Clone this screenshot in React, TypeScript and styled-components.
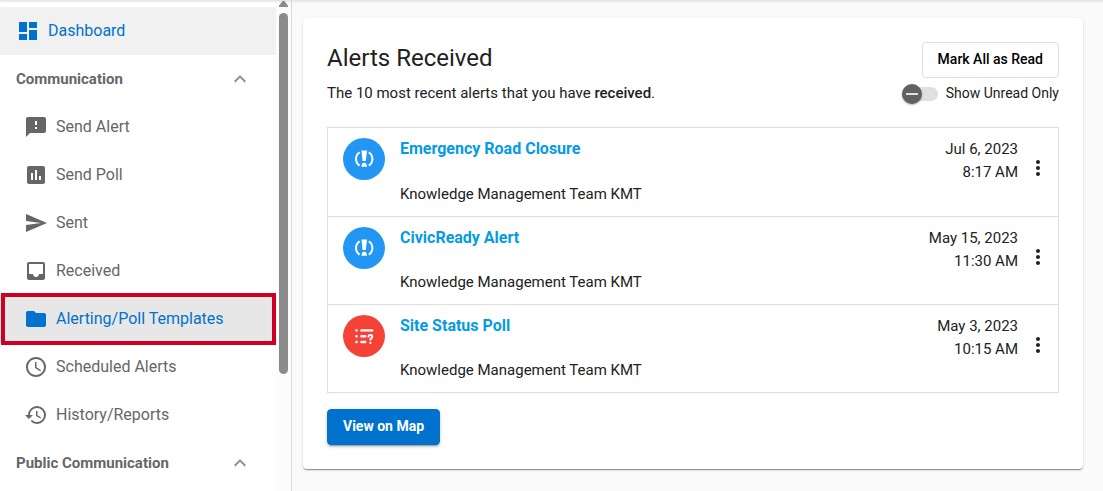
import React from 'react';
import styled, { createGlobalStyle, css } from 'styled-components';
import {
  MdAccessTime,
  MdDashboard,
  MdExpandLess,
  MdFeedback,
  MdFolder,
  MdHistory,
  MdInbox,
  MdMoreVert,
  MdPoll,
  MdSend,
} from 'react-icons/md';

const GlobalStyle = createGlobalStyle`
  *, *::before, *::after { box-sizing: border-box; }
  body {
    margin: 0;
    background: #fafafa;
    color: #212121;
    font-family: Roboto, "Liberation Sans", sans-serif;
    font-size: 15px;
    line-height: 23px;
  }
  button, input { font-family: inherit; }
`;

const Page = styled.div`
  display: flex;
  height: 100vh;
  overflow: hidden;
`;

const TopBar = styled.header`
  position: fixed;
  top: 0;
  left: 0;
  right: 0;
  z-index: 2;
  height: 1px;
  background: #e6e6e6;
  box-shadow: 0 1px 2px rgba(0, 0, 0, 0.12);
`;

const Sidebar = styled.aside`
  display: flex;
  flex: none;
  width: 292px;
  background: #fff;
  border-right: 1px solid #dcdcdc;
`;

const Nav = styled.nav`
  flex: 1;
  padding-top: 7px;
`;

const ScrollTrack = styled.div`
  display: flex;
  flex-direction: column;
  align-items: center;
  gap: 6px;
  width: 15px;
  background: #fcfcfc;
`;

const ScrollArrow = styled.svg`
  display: block;
  flex: none;
  width: 9px;
  height: 7px;
  fill: #8b8b8b;
`;

const ScrollThumb = styled.div`
  width: 9px;
  height: 361px;
  border-radius: 5px;
  background: #8b8b8b;
`;

const NavLink = styled.a<{ $nested?: boolean; $active?: boolean; $fill?: string; $marked?: boolean }>`
  position: relative;
  display: flex;
  align-items: center;
  gap: 8px;
  height: 48px;
  padding-left: ${(p) => (p.$nested ? 24 : 16)}px;
  background: ${(p) => p.$fill ?? 'transparent'};
  color: ${(p) => (p.$active ? '#0072ce' : '#666')};
  font-size: 16px;
  text-decoration: none;

  svg { width: 24px; height: 24px; }

  ${(p) =>
    p.$marked &&
    css`
      &::after {
        content: '';
        position: absolute;
        inset: -2px 0 -2px 1px;
        border: 4px solid #cc0022;
      }
    `}
`;

const NavLabel = styled.span`
  padding-bottom: 2px;
`;

const NavGroup = styled.button`
  display: flex;
  align-items: center;
  justify-content: space-between;
  width: 100%;
  height: 48px;
  padding: 0 24px 0 16px;
  border: 0;
  background: none;
  color: #666;
  font-size: 15px;
  font-weight: 700;

  svg { width: 24px; height: 24px; fill: #8f8f8f; }
`;

const Main = styled.main`
  flex: 1;
  min-width: 0;
  padding: 18px 20px 20px 11px;
`;

const Card = styled.section`
  padding: 24px;
  border-radius: 4px;
  background: #fff;
  box-shadow:
    0 2px 1px -1px rgba(0, 0, 0, 0.24),
    0 1px 1px rgba(0, 0, 0, 0.2),
    0 1px 3px rgba(0, 0, 0, 0.12);
`;

const CardHeader = styled.header`
  display: flex;
  justify-content: space-between;
  margin-bottom: 22px;
`;

const Title = styled.h1`
  margin: 0 0 8px;
  font-size: 24px;
  font-weight: 400;
  line-height: 32px;
`;

const Subtitle = styled.p`
  margin: 0;
  strong { font-weight: 500; }
`;

const Actions = styled.div`
  display: flex;
  flex-direction: column;
  align-items: flex-end;
  gap: 4px;
`;

const Button = styled.button<{ $primary?: boolean }>`
  height: 36px;
  padding: 0 15px 2px;
  border: 1px solid ${(p) => (p.$primary ? '#0072ce' : '#dedede')};
  border-radius: 4px;
  background: ${(p) => (p.$primary ? '#0072ce' : '#fff')};
  color: ${(p) => (p.$primary ? '#fff' : '#000')};
  font-size: 14px;
  font-weight: ${(p) => (p.$primary ? 700 : 500)};
  box-shadow: ${(p) =>
    p.$primary ? '0 3px 1px -2px rgba(0,0,0,.2), 0 2px 2px rgba(0,0,0,.14), 0 1px 5px rgba(0,0,0,.12)' : 'none'};
`;

const SwitchLabel = styled.label`
  display: flex;
  align-items: center;
  gap: 8px;
  font-size: 14px;
`;

const Switch = styled.input`
  position: relative;
  width: 36px;
  height: 20px;
  margin: 0;
  appearance: none;

  &::before {
    content: '';
    position: absolute;
    inset: 3px 0;
    border-radius: 7px;
    background: #e0e0e0;
  }

  &::after {
    content: '';
    position: absolute;
    top: 0;
    left: 0;
    width: 20px;
    height: 20px;
    border-radius: 50%;
    background: linear-gradient(#e0e0e0, #e0e0e0) center / 12px 2px no-repeat #616161;
    box-shadow: 0 1px 2px rgba(0, 0, 0, 0.3);
  }

  &:checked::after { left: 16px; }
`;

const AlertList = styled.ul`
  margin: 0 0 16px;
  padding: 0;
  border: 1px solid #dedede;
  list-style: none;
`;

const AlertRow = styled.li`
  display: flex;
  min-height: 88px;
  padding: 10px 8px 10px 15px;

  & + & { border-top: 1px solid #dedede; }
`;

const Badge = styled.span<{ $color: string }>`
  display: flex;
  flex: none;
  align-items: center;
  justify-content: center;
  width: 42px;
  height: 42px;
  margin-right: 15px;
  border-radius: 50%;
  background: ${(p) => p.$color};
`;

const AlertBody = styled.div`
  display: flex;
  flex: 1;
  flex-direction: column;
  justify-content: space-between;
`;

const AlertTitle = styled.a`
  color: #039be5;
  font-size: 16px;
  font-weight: 700;
  line-height: 21px;
  text-decoration: none;
`;

const AlertTime = styled.time`
  text-align: right;
  span { display: block; }
`;

const MenuButton = styled.button`
  align-self: flex-start;
  margin: 18px 0 0 8px;
  padding: 0;
  border: 0;
  background: none;
  color: #212121;

  svg { display: block; width: 24px; height: 24px; }
`;

const AlertGlyph = () => (
  <svg width="20" height="20" viewBox="0 0 20 20" fill="none" stroke="#fff" strokeWidth="2">
    <path d="M5.6 3.2C.8 6.6.8 13.2 5.6 16.6M14.8 3.2c4.8 3.4 4.8 10 0 13.4" />
    <path d="M7.4 1.6h5.6l-1.2 10.4H8.6zM8 15c.8-1.6 3.6-1.6 4.4 0l.6 2.8H7.4z" fill="#fff" stroke="none" />
  </svg>
);

const PollGlyph = () => (
  <svg width="20" height="20" viewBox="0 0 20 20" fill="none" stroke="#fff" strokeWidth="2.4" strokeLinecap="round">
    <path d="M2.4 4.4h.2M2.4 10.2h.2M2.4 16h.2M7.4 4.4h10.8M7.4 10.2h3.8M7.4 16h3.8" />
    <path d="M14.4 10.6c.2-2.4 4-2.2 3.9.2 0 1.3-1.9 1.4-1.9 2.9" strokeWidth="2" />
    <path d="M16.4 16.8v.1" strokeWidth="2.2" />
  </svg>
);

const navItems = [
  { label: 'Send Alert', icon: <MdFeedback /> },
  { label: 'Send Poll', icon: <MdPoll /> },
  { label: 'Sent', icon: <MdSend /> },
  { label: 'Received', icon: <MdInbox /> },
  { label: 'Alerting/Poll Templates', icon: <MdFolder />, selected: true },
  { label: 'Scheduled Alerts', icon: <MdAccessTime /> },
  { label: 'History/Reports', icon: <MdHistory /> },
];

const alerts = [
  { title: 'Emergency Road Closure', date: 'Jul 6, 2023', time: '8:17 AM', poll: false },
  { title: 'CivicReady Alert', date: 'May 15, 2023', time: '11:30 AM', poll: false },
  { title: 'Site Status Poll', date: 'May 3, 2023', time: '10:15 AM', poll: true },
];

export default function App() {
  return (
    <>
      <GlobalStyle />
      <TopBar />
      <Page>
        <Sidebar>
          <Nav>
            <NavLink href="#dashboard" $active $fill="#f1f1f1">
              <MdDashboard />
              <NavLabel>Dashboard</NavLabel>
            </NavLink>
            <NavGroup type="button" aria-expanded="true">
              Communication
              <MdExpandLess />
            </NavGroup>
            {navItems.map((item) => (
              <NavLink
                key={item.label}
                href="#"
                $nested
                $active={item.selected}
                $marked={item.selected}
                $fill={item.selected ? '#e7e7e7' : undefined}
              >
                {item.icon}
                <NavLabel>{item.label}</NavLabel>
              </NavLink>
            ))}
            <NavGroup type="button" aria-expanded="true">
              Public Communication
              <MdExpandLess />
            </NavGroup>
          </Nav>
          <ScrollTrack aria-hidden="true">
            <ScrollArrow viewBox="0 0 9 7">
              <path d="M4.5 0 9 5.6V7H0V5.6z" />
            </ScrollArrow>
            <ScrollThumb />
          </ScrollTrack>
        </Sidebar>
        <Main>
          <Card>
            <CardHeader>
              <div>
                <Title>Alerts Received</Title>
                <Subtitle>
                  The 10 most recent alerts that you have <strong>received</strong>.
                </Subtitle>
              </div>
              <Actions>
                <Button type="button">Mark All as Read</Button>
                <SwitchLabel>
                  <Switch type="checkbox" role="switch" />
                  Show Unread Only
                </SwitchLabel>
              </Actions>
            </CardHeader>
            <AlertList>
              {alerts.map((alert) => (
                <AlertRow key={alert.title}>
                  <Badge $color={alert.poll ? '#f44336' : '#2196f3'}>
                    {alert.poll ? <PollGlyph /> : <AlertGlyph />}
                  </Badge>
                  <AlertBody>
                    <AlertTitle href="#">{alert.title}</AlertTitle>
                    <span>Knowledge Management Team KMT</span>
                  </AlertBody>
                  <AlertTime>
                    <span>{alert.date}</span>
                    <span>{alert.time}</span>
                  </AlertTime>
                  <MenuButton type="button" aria-label={`Options for ${alert.title}`}>
                    <MdMoreVert />
                  </MenuButton>
                </AlertRow>
              ))}
            </AlertList>
            <Button type="button" $primary>
              View on Map
            </Button>
          </Card>
        </Main>
      </Page>
    </>
  );
}
